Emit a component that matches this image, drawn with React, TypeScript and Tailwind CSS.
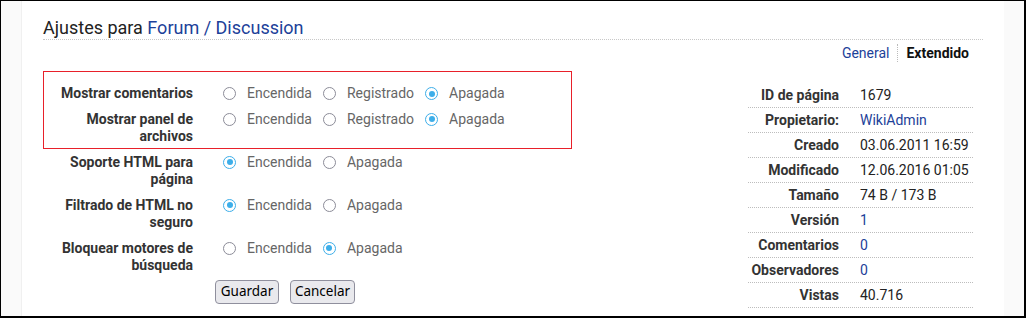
import React from "react";

type Opt = { label: string; on?: boolean };

const rows: { label: React.ReactNode; opts: Opt[] }[] = [
  { label: "Mostrar comentarios", opts: [{ label: "Encendida" }, { label: "Registrado" }, { label: "Apagada", on: true }] },
  { label: <>Mostrar panel de<br />archivos</>, opts: [{ label: "Encendida" }, { label: "Registrado" }, { label: "Apagada", on: true }] },
  { label: <>Soporte HTML para<br />página</>, opts: [{ label: "Encendida", on: true }, { label: "Apagada" }] },
  { label: <>Filtrado de HTML no<br />seguro</>, opts: [{ label: "Encendida", on: true }, { label: "Apagada" }] },
  { label: <>Bloquear motores de<br />búsqueda</>, opts: [{ label: "Encendida" }, { label: "Apagada", on: true }] },
];

const info: { k: string; v: string; link?: boolean }[] = [
  { k: "ID de página", v: "1679" },
  { k: "Propietario:", v: "WikiAdmin", link: true },
  { k: "Creado", v: "03.06.2011 16:59" },
  { k: "Modificado", v: "12.06.2016 01:05" },
  { k: "Tamaño", v: "74 B / 173 B" },
  { k: "Versión", v: "1", link: true },
  { k: "Comentarios", v: "0", link: true },
  { k: "Observadores", v: "0", link: true },
  { k: "Vistas", v: "40.716" },
];

function Radio({ on }: { on?: boolean }) {
  return on ? (
    <span className="w-[13px] h-[13px] rounded-full border-[1.5px] border-[#3daee9] flex items-center justify-center shrink-0">
      <span className="w-[6px] h-[6px] rounded-full bg-[#3daee9]" />
    </span>
  ) : (
    <span className="w-[13px] h-[13px] rounded-full border-[1.5px] border-[#8c8c98] shrink-0" />
  );
}

export default function App() {
  return (
    <div className="w-[1026px] h-[318px] border-l border-t border-r-2 border-b-2 border-black bg-[#fafafa] flex overflow-hidden font-['Roboto',sans-serif] text-[14px]">
      <div className="w-[21px] border-r border-[#f0f0f0]" />
      <main className="relative w-[982px] bg-white px-[21px] pt-[16px]">
        <h1 className="text-[18px] leading-[22px] text-[#222] border-b border-dotted border-[#c8c8c8]">
          Ajustes para <span className="text-[#1c4199]">Forum / Discussion</span>
        </h1>

        <div className="flex justify-end pr-[14px] mt-[4px] leading-[18px]">
          <span className="text-[#1c4199] pr-[8px]">General</span>
          <span className="border-l border-dotted border-[#bbb]" />
          <span className="font-bold text-[#111] pl-[8px]">Extendido</span>
        </div>

        <div className="flex justify-between">
          <div className="pt-[19px]">
            {rows.map((r, i) => (
              <div key={i} className="flex py-[4px] leading-[17.5px]">
                <div className="w-[150px] text-right font-bold text-[#333]">{r.label}</div>
                <div className="flex items-start pl-[30px] text-[#666]">
                  {r.opts.map((o, j) => (
                    <div key={j} className="flex items-center h-[17.5px] mr-[11px]">
                      <Radio on={o.on} />
                      <span className="ml-[11px]">{o.label}</span>
                    </div>
                  ))}
                </div>
              </div>
            ))}
            <div className="flex gap-[11px] ml-[172px] mt-[1px]">
              <button className="w-[64px] h-[24px] rounded-[4px] border border-[#8f8f9d] bg-[#e9e9ed] text-black font-['Noto_Sans',sans-serif] text-[13.5px] leading-none">
                Guardar
              </button>
              <button className="w-[65px] h-[24px] rounded-[4px] border border-[#8f8f9d] bg-[#e9e9ed] text-black font-['Noto_Sans',sans-serif] text-[13.5px] leading-none">
                Cancelar
              </button>
            </div>
          </div>

          <div className="w-[225px] mr-[10px] pt-[21px]">
            {info.map((r) => (
              <div key={r.k} className="flex h-[25px] items-center border-b border-dotted border-[#bdbdbd]">
                <div className="w-[101px] pr-[10px] text-right font-bold text-[#333]">{r.k}</div>
                <div className={"pl-[11px] " + (r.link ? "text-[#1c4199]" : "text-[#222]")}>{r.v}</div>
              </div>
            ))}
          </div>
        </div>

        <div className="absolute left-[21px] top-[70px] w-[529px] h-[78px] border border-[#e8202a]" />
      </main>
      <div className="flex-1" />
    </div>
  );
}
